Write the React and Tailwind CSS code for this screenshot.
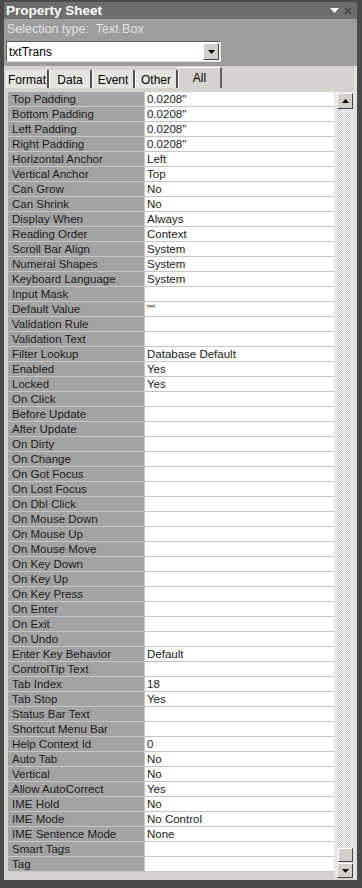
const rows = [
  ['Top Padding', '0.0208"'],
  ['Bottom Padding', '0.0208"'],
  ['Left Padding', '0.0208"'],
  ['Right Padding', '0.0208"'],
  ['Horizontal Anchor', 'Left'],
  ['Vertical Anchor', 'Top'],
  ['Can Grow', 'No'],
  ['Can Shrink', 'No'],
  ['Display When', 'Always'],
  ['Reading Order', 'Context'],
  ['Scroll Bar Align', 'System'],
  ['Numeral Shapes', 'System'],
  ['Keyboard Language', 'System'],
  ['Input Mask', ''],
  ['Default Value', '""'],
  ['Validation Rule', ''],
  ['Validation Text', ''],
  ['Filter Lookup', 'Database Default'],
  ['Enabled', 'Yes'],
  ['Locked', 'Yes'],
  ['On Click', ''],
  ['Before Update', ''],
  ['After Update', ''],
  ['On Dirty', ''],
  ['On Change', ''],
  ['On Got Focus', ''],
  ['On Lost Focus', ''],
  ['On Dbl Click', ''],
  ['On Mouse Down', ''],
  ['On Mouse Up', ''],
  ['On Mouse Move', ''],
  ['On Key Down', ''],
  ['On Key Up', ''],
  ['On Key Press', ''],
  ['On Enter', ''],
  ['On Exit', ''],
  ['On Undo', ''],
  ['Enter Key Behavior', 'Default'],
  ['ControlTip Text', ''],
  ['Tab Index', '18'],
  ['Tab Stop', 'Yes'],
  ['Status Bar Text', ''],
  ['Shortcut Menu Bar', ''],
  ['Help Context Id', '0'],
  ['Auto Tab', 'No'],
  ['Vertical', 'No'],
  ['Allow AutoCorrect', 'Yes'],
  ['IME Hold', 'No'],
  ['IME Mode', 'No Control'],
  ['IME Sentence Mode', 'None'],
  ['Smart Tags', ''],
  ['Tag', ''],
];

const tabs = ['Format', 'Data', 'Event', 'Other'];

const Arrow = ({ up, className }) => (
  <svg width="7" height="4" viewBox="0 0 7 4" className={className}>
    {up ? <polygon points="3.5,0 7,4 0,4" fill="currentColor" /> : <polygon points="0,0 7,0 3.5,4" fill="currentColor" />}
  </svg>
);

const Button3d = ({ children, className }) => (
  <div
    className={`bg-[#d4d0c8] border border-t-white border-l-white border-r-[#404040] border-b-[#404040] flex items-center justify-center text-black ${className}`}
  >
    {children}
  </div>
);

export default function App() {
  return (
    <div className="w-[362px] h-[888px] bg-[#4a4a4a] pl-[4px] pr-[5px] pt-[2px] pb-[8px] flex flex-col font-['Liberation_Sans',sans-serif] text-[11.5px] leading-none overflow-hidden">
      {/* Title bar */}
      <div className="h-[17px] bg-[#6e6e6e] flex items-center justify-between pl-[2px] pr-[5px]">
        <span className="text-white font-bold text-[13.5px] pt-px">Property Sheet</span>
        <div className="flex items-center gap-[5px]">
          <svg width="9" height="5" viewBox="0 0 9 5">
            <polygon points="0,0 9,0 4.5,5" fill="#ffffff" />
          </svg>
          <svg width="8" height="8" viewBox="0 0 8 8">
            <path d="M1 1 L7 7 M7 1 L1 7" stroke="#4a4a4a" strokeWidth="2" />
          </svg>
        </div>
      </div>

      {/* Selection panel */}
      <div className="h-[47px] bg-[#9d9d9d] pl-[3px] pt-[3px]">
        <div className="text-[#e2e2e2] text-[12.5px] h-[14px] leading-[14px] whitespace-pre">Selection type:  Text Box</div>
        <div className="mt-[5px] ml-[-1px] w-[215px] h-[21px] bg-white border border-t-[#5a5a5a] border-l-[#5a5a5a] border-r-[#e0e0e0] border-b-[#e0e0e0] flex items-center justify-between pl-[2px] pr-[1px]">
          <span className="text-black text-[12px]">txtTrans</span>
          <Button3d className="w-[16px] h-[17px]">
            <Arrow />
          </Button3d>
        </div>
      </div>

      {/* Content */}
      <div className="flex-1 bg-[#d6d3ce] flex flex-col border-r-[3px] border-r-[#e4e2de]">
        {/* Tabs */}
        <div className="h-[22px] flex items-end pl-[2px]">
          {tabs.map((t) => (
            <div
              key={t}
              className="h-[18px] w-[43px] bg-[#e6e4e0] border-l border-l-white border-r-2 border-r-[#505050] flex items-center justify-center text-black text-[12px] pt-px"
            >
              {t}
            </div>
          ))}
          <div className="h-[21px] w-[44px] bg-[#d6d3ce] border-t border-l border-t-white border-l-white border-r-2 border-r-[#606060] flex items-start justify-center pt-[4px] text-black text-[12px]">
            All
          </div>
        </div>

        {/* Body */}
        <div className="flex-1 flex pl-[4px] pt-[4px] pb-[2px]">
          <div className="w-[327px] flex flex-col">
            {rows.map(([label, value]) => (
              <div key={label} className="h-[15px] flex border-b border-b-[#c6c6c6]">
                <div className="w-[136px] bg-[#a3a3a3] text-[#1c1c1c] pl-[4px] pt-px flex items-center whitespace-nowrap">
                  {label}
                </div>
                <div className="w-px bg-[#c6c6c6]" />
                <div className="flex-1 bg-white text-[#1c1c1c] pl-[2px] pt-px flex items-center whitespace-nowrap">
                  {value}
                </div>
              </div>
            ))}
          </div>

          {/* Scrollbar */}
          <div className="w-[20px] flex flex-col items-end pr-[1px] bg-[image:repeating-conic-gradient(#cfcfcf_0%_25%,#ffffff_0%_50%)] bg-size-[2px_2px]">
            <Button3d className="w-[16px] h-[16px] mt-[1px]">
              <Arrow up />
            </Button3d>
            <div className="flex-1" />
            <Button3d className="w-[15px] h-[14px]" />
            <Button3d className="w-[16px] h-[15px] mt-px">
              <Arrow />
            </Button3d>
          </div>
        </div>
      </div>
    </div>
  );
}
